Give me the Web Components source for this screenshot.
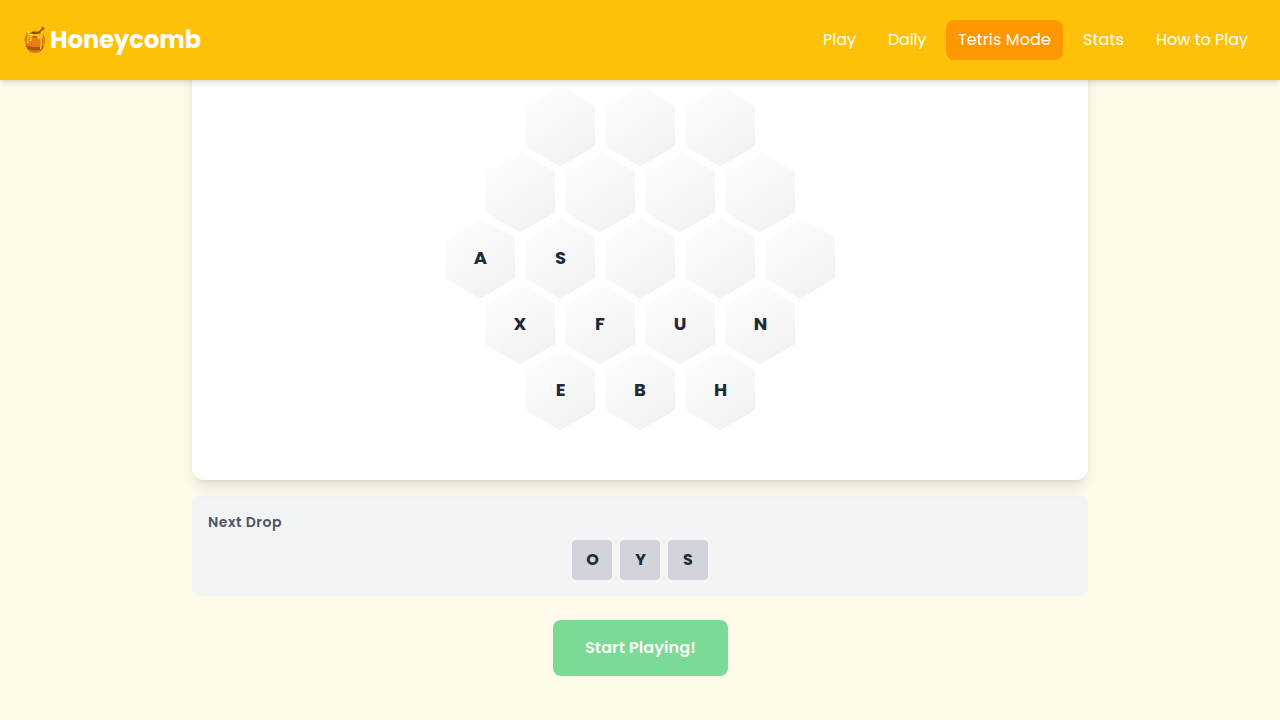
<!DOCTYPE html>
<html lang="en">
<head>
<meta charset="utf-8">
<title>Honeycomb</title>
<style>
body{margin:0;height:720px;overflow:hidden;background:#fffbeb;font-family:Poppins,sans-serif;color:#1f2937}
</style>
</head>
<body>
<honey-app></honey-app>
<script>
const define = (name, html, setup) => {
  const tpl = document.createElement('template');
  tpl.innerHTML = html;
  customElements.define(name, class extends HTMLElement {
    constructor() {
      super();
      this.attachShadow({mode: 'open'}).append(tpl.content.cloneNode(true));
    }
    connectedCallback() { if (setup) setup(this, this.shadowRoot); }
  });
};

// Label tracked so that its advance equals the w attribute.
define('fit-label', `<style>
:host{display:inline-block;white-space:nowrap;vertical-align:top}
span{display:inline-block}
</style><span><slot></slot></span>`, (el, root) => {
  const span = root.querySelector('span');
  const w = +el.getAttribute('w');
  const natural = span.getBoundingClientRect().width;
  span.style.letterSpacing = (w - natural) / el.textContent.length + 'px';
  el.style.width = w + 'px';
});

define('nav-item', `<style>
:host{display:block;padding:8px 12px;border-radius:8px;font-size:16px;line-height:24px;height:24px}
:host([active]){background:#ff9800}
</style><slot></slot>`);

define('app-header', `<style>
:host{display:flex;box-sizing:border-box;height:80px;padding:0 20px;align-items:center;justify-content:space-between;background:#ffc107;color:#fff;position:relative;z-index:2;box-shadow:0 4px 6px -1px rgba(0,0,0,.1),0 2px 4px -2px rgba(0,0,0,.1)}
.brand{font-size:24px;font-weight:700;line-height:32px;letter-spacing:.06px}
nav{display:flex;gap:8px}
</style>
<div class="brand">🍯Honeycomb</div>
<nav>
<nav-item><fit-label w="33">Play</fit-label></nav-item>
<nav-item><fit-label w="38">Daily</fit-label></nav-item>
<nav-item active><fit-label w="93">Tetris Mode</fit-label></nav-item>
<nav-item><fit-label w="41">Stats</fit-label></nav-item>
<nav-item><fit-label w="92">How to Play</fit-label></nav-item>
</nav>`);

define('hex-cell', `<style>
:host{display:flex;box-sizing:border-box;width:70px;height:80.830px;align-items:center;justify-content:center;font-size:18px;font-weight:700;line-height:28px;background:linear-gradient(145deg,#fff,#f0f0f0);clip-path:polygon(50% 0,100% 25%,100% 75%,50% 100%,0 75%,0 25%)}
:host([nudge]){padding-left:1px}
</style><slot></slot>`);

define('hex-board', `<style>
:host{display:flex;flex-direction:column;align-items:center;justify-content:flex-end;box-sizing:border-box;height:440px;padding-bottom:49.600px;background:#fff;border-radius:12px;position:relative;box-shadow:0 10px 15px -3px rgba(0,0,0,.1),0 4px 6px -4px rgba(0,0,0,.1)}
.row{display:flex;gap:10px}
.row+.row{margin-top:-14.830px}
</style>`, (el, root) => {
  for (const letters of ['   ', '    ', 'AS   ', 'XFUN', 'EBH']) {
    const row = document.createElement('div');
    row.className = 'row';
    for (const ch of letters) {
      const cell = document.createElement('hex-cell');
      cell.textContent = ch.trim();
      // Optical centring of the letters with an odd advance.
      cell.toggleAttribute('nudge', 'ASNEH'.includes(ch));
      row.append(cell);
    }
    root.append(row);
  }
});

define('drop-tile', `<style>
:host{display:flex;box-sizing:border-box;width:40px;height:40px;border-radius:4px;background:#d1d5db;align-items:center;justify-content:center;font-size:16px;font-weight:700;line-height:24px}
:host([nudge]){padding-left:1px}
</style><slot></slot>`);

define('next-drop', `<style>
:host{display:block;box-sizing:border-box;height:100px;margin-top:16px;padding:16px;background:#f3f4f6;border-radius:8px}
.title{height:20px;margin-bottom:8px;font-size:14px;line-height:20px;font-weight:600;color:#4b5563}
.tiles{display:flex;gap:8px;justify-content:center}
</style>
<div class="title"><fit-label w="74">Next Drop</fit-label></div>
<div class="tiles"><drop-tile nudge>O</drop-tile><drop-tile nudge>Y</drop-tile><drop-tile>S</drop-tile></div>`);

define('start-button', `<style>
:host{display:flex;justify-content:center;margin-top:24px;padding-left:1px}
button{display:block;border:0;margin:0;padding:16px 32px;height:56px;border-radius:8px;background:#22c55e;opacity:.6;color:#fff;font:600 16px/24px Poppins,sans-serif}
</style><button><slot></slot></button>`);

define('honey-app', `<style>
:host{display:block}
main{width:896px;margin:-40px auto 0}
</style>
<app-header></app-header>
<main>
<hex-board></hex-board>
<next-drop></next-drop>
<start-button><fit-label w="111">Start Playing!</fit-label></start-button>
</main>`);
</script>
</body>
</html>
